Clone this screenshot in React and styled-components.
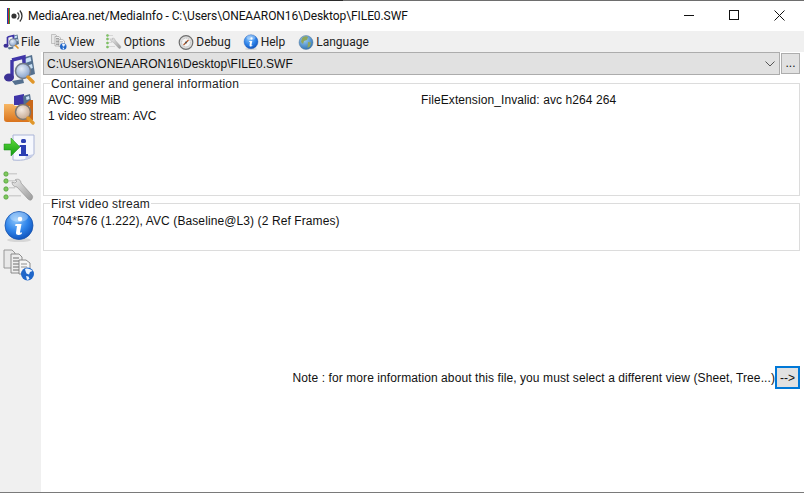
import React from "react"
import styled, { createGlobalStyle } from "styled-components"

const GlobalStyle = createGlobalStyle`
  html, body {
    margin: 0;
    padding: 0;
    background: #fff;
  }
`

function Defs() {
  return (
    <svg width="0" height="0" style={{ position: "absolute" }}>
      <defs>
        <radialGradient id="blueBall" cx="40%" cy="30%" r="75%">
          <stop offset="0" stopColor="#8cc6fb" />
          <stop offset="0.55" stopColor="#2f84ea" />
          <stop offset="1" stopColor="#0d4fb8" />
        </radialGradient>
        <radialGradient id="lens" cx="40%" cy="35%" r="70%">
          <stop offset="0" stopColor="#e6eef8" />
          <stop offset="1" stopColor="#7f9cc8" />
        </radialGradient>
        <radialGradient id="lensWarm" cx="40%" cy="35%" r="70%">
          <stop offset="0" stopColor="#f4ebe2" />
          <stop offset="1" stopColor="#c2a48c" />
        </radialGradient>
        <linearGradient id="folder" x1="0" y1="0" x2="0" y2="1">
          <stop offset="0" stopColor="#f7b765" />
          <stop offset="1" stopColor="#d9731c" />
        </linearGradient>
        <linearGradient id="arrow" x1="0" y1="0" x2="0" y2="1">
          <stop offset="0" stopColor="#5fdc3a" />
          <stop offset="1" stopColor="#119a14" />
        </linearGradient>
        <linearGradient id="steel" x1="0" y1="0" x2="1" y2="1">
          <stop offset="0" stopColor="#ececec" />
          <stop offset="1" stopColor="#9a9a9a" />
        </linearGradient>
        <radialGradient id="globe" cx="40%" cy="30%" r="75%">
          <stop offset="0" stopColor="#9dd0f5" />
          <stop offset="1" stopColor="#2b6fb3" />
        </radialGradient>
      </defs>
    </svg>
  )
}

function AppLogo() {
  return (
    <svg width="17" height="18" viewBox="0 0 17 18">
      <rect x="0" y="1" width="1" height="16" fill="#1c3fae" />
      <rect x="1" y="1" width="1" height="16" fill="#c22a2a" />
      <rect x="2" y="1" width="1" height="16" fill="#2f9a36" />
      <circle cx="7" cy="9" r="2.6" fill="#333" />
      <path d="M10.5 5.5a5 5 0 0 1 0 7" fill="none" stroke="#333" strokeWidth="1.3" />
      <path d="M12.8 3.5a8 8 0 0 1 0 11" fill="none" stroke="#333" strokeWidth="1.3" />
    </svg>
  )
}

function MusicIcon({ size = 32 }) {
  return (
    <svg width={size} height={size} viewBox="0 0 32 32">
      <path d="M19 4l10-3 3 19-9 3z" fill="#54708f" />
      <path d="M21.5 5l6-2 .8 4-6 2zM23 12l6-2 .8 4-6 2z" fill="#c9e1f5" />
      <path d="M9 6l12-3v16" fill="none" stroke="#3f35a8" strokeWidth="3.4" />
      <path d="M9 6v17" fill="none" stroke="#3f35a8" strokeWidth="3.4" />
      <ellipse cx="6" cy="23.5" rx="5" ry="4" fill="#3c3296" />
      <path d="M9 27l11-2 1 4-9 2z" fill="#54708f" />
      <circle cx="20" cy="17" r="7.5" fill="url(#lens)" stroke="#737b88" strokeWidth="1.5" />
      <path d="M25 23l5 5" stroke="#e0962a" strokeWidth="3.4" strokeLinecap="round" />
    </svg>
  )
}

function FolderIcon() {
  return (
    <svg width="32" height="32" viewBox="0 0 32 32">
      <path d="M11 12V3l10-2v11z" fill="#3f35a8" />
      <path d="M20 3l7-2 2 14h-8z" fill="#54708f" />
      <path d="M23 4l3-1 .6 3-3 1z" fill="#c9e1f5" />
      <path d="M27 7h3v20H4z" fill="#c9681a" />
      <path d="M1 11h9l2 2h15l-1 16H4c-2 0-3-1-3-3z" fill="url(#folder)" />
      <circle cx="20" cy="19" r="7.5" fill="url(#lensWarm)" stroke="#7b7670" strokeWidth="1.5" />
      <path d="M25 25l5 5" stroke="#e0962a" strokeWidth="3.4" strokeLinecap="round" />
    </svg>
  )
}

function ExportIcon() {
  return (
    <svg width="32" height="32" viewBox="0 0 32 32">
      <path d="M10 3h21v19c-3 5-10 7-21 6z" fill="#f6f8fe" stroke="#aab4d6" />
      <path d="M22 28c4-1 7-3 9-6-3 1-6 1-8 1z" fill="#c6cee8" />
      <rect x="18" y="7" width="5" height="4" rx="1.5" fill="#2b3fb3" />
      <path d="M16.5 13h6.5v9h2v2h-9v-2h2v-7h-1.500z" fill="#2b3fb3" />
      <path d="M1 12h7V6l9 9-9 9v-6H1z" fill="url(#arrow)" stroke="#1b8a1a" strokeWidth=".5" />
    </svg>
  )
}

function WrenchIcon({ size = 32 }) {
  return (
    <svg width={size} height={size} viewBox="0 0 32 32">
      <g fill="#cfcfcf">
        <rect x="6" y="2" width="8" height="1.500" />
        <rect x="6" y="9" width="6" height="1.500" />
        <rect x="6" y="16" width="6" height="1.500" />
        <rect x="6" y="24" width="12" height="1.500" />
      </g>
      <g fill="#7fc95f" stroke="#4c9a35" strokeWidth=".7">
        <circle cx="3" cy="3" r="2.200" />
        <circle cx="3" cy="10" r="2.200" />
        <circle cx="3" cy="18" r="2.200" />
        <circle cx="3" cy="26" r="2.200" />
      </g>
      <path d="M12 9c3-2 6 0 6 3l10 11c2 2 2 3 1 5s-3 1-4 0L14 16c-3 0-5-2-5-5l3 1 2-2z" fill="url(#steel)" stroke="#8c8c8c" strokeWidth=".6" />
    </svg>
  )
}

function InfoBall({ size = 32 }) {
  return (
    <svg width={size} height={size} viewBox="0 0 32 32">
      <ellipse cx="16" cy="30" rx="12" ry="2" fill="#d6d6d6" />
      <circle cx="16" cy="15.500" r="14" fill="url(#blueBall)" stroke="#1b55ad" strokeWidth=".8" />
      <ellipse cx="16" cy="7" rx="9" ry="5" fill="#fff" opacity=".28" />
      <circle cx="17" cy="9" r="2.300" fill="#fff" />
      <path d="M12.500 14h6l-1.500 8c0 1 .6 1 2 .3l-.3 1.700c-2.500 1.500-6 1.500-5.700-1.500l1-6.500h-1.800z" fill="#fff" />
    </svg>
  )
}

function DocsIcon({ size = 32 }) {
  return (
    <svg width={size} height={size} viewBox="0 0 32 32">
      <path d="M1 1h8l3 3v15H1z" fill="#e8e8e8" stroke="#8f8f8f" strokeWidth=".9" />
      <path d="M8 5h8l3 3v16H8z" fill="#eeeeee" stroke="#808080" strokeWidth=".9" />
      <path d="M10 9h6M10 12h6M10 15h6M10 18h6M10 21h6" stroke="#6f6f6f" strokeWidth="1.200" />
      <path d="M16 11h7l4 3v11H16z" fill="#f6f6f6" stroke="#808080" strokeWidth=".9" />
      <path d="M18 15h6M18 18h6" stroke="#909090" />
      <circle cx="24.500" cy="25" r="6.500" fill="#1f66c9" />
      <path d="M22 20c2-1 6 0 7.500 2l-2.500 1-1 2.500-2.500-1-1-2.500zM23 27l2.500.5 1 2.500-2.500 1z" fill="#e9f3ff" />
    </svg>
  )
}

function GlobeIcon() {
  return (
    <svg width="16" height="16" viewBox="0 0 16 16">
      <circle cx="8" cy="8.500" r="7" fill="url(#globe)" stroke="#5f7f9f" strokeWidth=".5" />
      <path d="M4 4c2-2 5-2 6-1l-1 3-3 1-1 3-2-2zM10 8l3 .5-1 4-2.500 1.500z" fill="#8fa65c" />
    </svg>
  )
}

function GaugeIcon() {
  return (
    <svg width="16" height="16" viewBox="0 0 16 16">
      <circle cx="8" cy="8.500" r="6.800" fill="#dcdcdc" stroke="#6e6e6e" strokeWidth="1.200" />
      <circle cx="8" cy="8.500" r="4.300" fill="#f6f6f6" stroke="#9a9a9a" strokeWidth=".6" strokeDasharray="1 1" />
      <path d="M5.500 11l5-5" stroke="#b3562a" strokeWidth="1.200" />
      <circle cx="8" cy="8.500" r="1" fill="#555" />
    </svg>
  )
}

const menus = [
  { label: "File", icon: <MusicIcon size={16} /> },
  { label: "View", icon: <DocsIcon size={16} /> },
  { label: "Options", icon: <WrenchIcon size={16} />, extra: 2 },
  { label: "Debug", icon: <GaugeIcon />, extra: 1 },
  { label: "Help", icon: <InfoBall size={16} />, extra: 2 },
  { label: "Language", icon: <GlobeIcon /> },
]

const tools = [
  <MusicIcon key="open" />,
  <FolderIcon key="folder" />,
  <ExportIcon key="export" />,
  <WrenchIcon key="prefs" />,
  <InfoBall key="about" />,
  <DocsIcon key="views" />,
]

function App() {
  return (
    <Window>
      <GlobalStyle />
      <Defs />
      <TopEdge />
      <TitleBar>
        <AppLogo />
        <Caption>MediaArea.net/MediaInfo - C:\Users\ONEAARON16\Desktop\FILE0.SWF</Caption>
        <WinButtons>
          <WinButton>
            <svg width="11" height="11" viewBox="0 0 11 11"><path d="M0 5.500h10" stroke="#111" fill="none" /></svg>
          </WinButton>
          <WinButton>
            <svg width="11" height="11" viewBox="0 0 11 11"><rect x=".5" y=".5" width="9" height="9" stroke="#111" fill="none" /></svg>
          </WinButton>
          <WinButton>
            <svg width="11" height="11" viewBox="0 0 11 11"><path d="M.5.500l10 10M10.500.500l-10 10" stroke="#111" fill="none" /></svg>
          </WinButton>
        </WinButtons>
      </TitleBar>
      <MenuBar>
        {menus.map((m) => (
          <MenuItem key={m.label} $extra={m.extra}>
            {m.icon}
            <span>{m.label}</span>
          </MenuItem>
        ))}
      </MenuBar>
      <Body>
        <ToolBar>
          {tools}
        </ToolBar>
        <Content>
          <FileRow>
            <Combo>
              <span>C:\Users\ONEAARON16\Desktop\FILE0.SWF</span>
              <svg width="10" height="6" viewBox="0 0 10 6"><path d="M.5.500L5 5 9.500.500" stroke="#555" fill="none" /></svg>
            </Combo>
            <MoreButton>...</MoreButton>
          </FileRow>
          <Group $height={121}>
            <Legend>Container and general information</Legend>
            <Columns>
              <div>
                <Line $track={-0.15}>AVC: 999 MiB</Line>
                <Line>1 video stream: AVC</Line>
              </div>
              <Line $track={0.09}>FileExtension_Invalid: avc h264 264</Line>
            </Columns>
          </Group>
          <Group $height={56}>
            <Legend>First video stream</Legend>
            <StreamLine $track={0.1}>704*576 (1.222), AVC (Baseline@L3) (2 Ref Frames)</StreamLine>
          </Group>
          <NoteRow>
            <Note>Note : for more information about this file, you must select a different view (Sheet, Tree...)</Note>
            <ArrowButton>--&gt;</ArrowButton>
          </NoteRow>
        </Content>
      </Body>
    </Window>
  )
}

const Window = styled.div`
  width: 804px;
  height: 493px;
  box-sizing: border-box;
  display: flex;
  flex-direction: column;
  overflow: hidden;
  background: #fff;
  border-bottom: 1px solid #7a7a7a;
`
const TopEdge = styled.div`
  height: 1px;
  flex: none;
  background: linear-gradient(to right, #2a2a2a 343px, #6e6e6e 343px);
`
const TitleBar = styled.div`
  height: 30px;
  flex: none;
  display: flex;
  align-items: center;
  padding-left: 7px;
`
const Caption = styled.div`
  margin-left: 4px;
  font-family: Roboto, "Noto Sans", sans-serif;
  font-size: 12px;
  letter-spacing: -0.09px;
  color: #111;
  white-space: nowrap;
`
const WinButtons = styled.div`
  margin-left: auto;
  margin-right: 2px;
  display: flex;
  align-items: center;
  height: 100%;
`
const WinButton = styled.div`
  width: 45px;
  height: 100%;
  display: flex;
  align-items: center;
  justify-content: center;
  padding-bottom: 1px;
  box-sizing: border-box;
`
const MenuBar = styled.div`
  height: 21px;
  flex: none;
  display: flex;
  align-items: center;
  padding-left: 3px;
  gap: 11px;
  background: #f0f0f0;
  font-family: Roboto, "Noto Sans", sans-serif;
  font-size: 12px;
  color: #222;
`
const MenuItem = styled.div`
  display: flex;
  align-items: center;
  gap: 2px;
  white-space: nowrap;
  margin-right: ${(p) => p.$extra || 0}px;
`
const Body = styled.div`
  flex: 1;
  min-height: 0;
  display: flex;
`
const ToolBar = styled.div`
  width: 41px;
  flex: none;
  box-sizing: border-box;
  padding: 2px 0 0 3px;
  background: #f0f0f0;
  display: flex;
  flex-direction: column;
  gap: 7px;
  > svg {
    display: block;
  }
`
const Content = styled.div`
  flex: 1;
  min-width: 0;
  padding: 0 4px 0 2px;
  font-family: "Liberation Sans", Arial, sans-serif;
  font-size: 12px;
  color: #111;
`
const FileRow = styled.div`
  display: flex;
  align-items: flex-start;
  gap: 1px;
`
const Combo = styled.div`
  flex: 1;
  height: 23px;
  box-sizing: border-box;
  border: 1px solid #acacac;
  background: #e1e1e1;
  display: flex;
  align-items: center;
  justify-content: space-between;
  padding: 0 4px 0 3px;
  letter-spacing: 0.03px;
`
const MoreButton = styled.div`
  width: 19px;
  height: 21px;
  margin-top: 1px;
  box-sizing: border-box;
  border: 1px solid #adadad;
  background: #e1e1e1;
  text-align: center;
  line-height: 19px;
`
const Group = styled.fieldset`
  margin: 0;
  padding: 0 4px;
  height: ${(p) => p.$height}px;
  box-sizing: border-box;
  border: 1px solid #dcdcdc;
  min-width: 0;
  & + & {
    margin-top: -1px;
  }
`
const Legend = styled.legend`
  padding: 2px 1px 0;
  margin-left: 2px;
  line-height: 15px;
  letter-spacing: 0.2px;
  color: #222;
`
const Columns = styled.div`
  display: grid;
  grid-template-columns: 373px 1fr;
`
const Line = styled.div`
  line-height: 16px;
  white-space: nowrap;
  letter-spacing: ${(p) => p.$track || 0}px;
`
const StreamLine = styled(Line)`
  margin: 1px 0 0 4px;
`
const NoteRow = styled.div`
  margin-top: 115px;
  display: flex;
  justify-content: flex-end;
  align-items: center;
`
const Note = styled.div`
  white-space: nowrap;
  letter-spacing: 0.09px;
  padding-top: 1px;
`
const ArrowButton = styled.div`
  width: 25px;
  height: 23px;
  box-sizing: border-box;
  border: 2px solid #0078d7;
  background: #e1e1e1;
  display: flex;
  align-items: center;
  justify-content: center;
  color: #111;
`

export default App
